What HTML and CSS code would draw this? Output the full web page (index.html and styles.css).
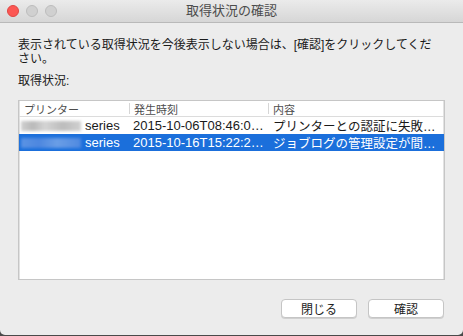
FILE: index.html
```html
<!DOCTYPE html>
<html lang="ja">
<head>
    <meta charset="UTF-8">
    <title>取得状況の確認</title>
    <link rel="stylesheet" href="styles.css">
</head>
<body>

<div class="window">
    <!-- Title bar -->
    <header class="titlebar">
        <div class="lights">
            <span class="light close"></span>
            <span class="light"></span>
            <span class="light"></span>
        </div>
        <h1 class="title">取得状況の確認</h1>
    </header>

    <div class="content">
        <p class="message">表示されている取得状況を今後表示しない場合は、[確認]をクリックしてください。</p>
        <p class="label">取得状況:</p>

        <div class="table">
            <div class="row head">
                <div class="cell printer">プリンター</div>
                <div class="cell date"><span class="sep"></span>発生時刻</div>
                <div class="cell detail"><span class="sep"></span>内容</div>
            </div>
            <div class="row">
                <div class="cell printer"><span class="blur"></span>series</div>
                <div class="cell date">2015-10-06T08:46:0…</div>
                <div class="cell detail">プリンターとの認証に失敗…</div>
            </div>
            <div class="row selected">
                <div class="cell printer"><span class="blur"></span>series</div>
                <div class="cell date">2015-10-16T15:22:2…</div>
                <div class="cell detail">ジョブログの管理設定が間…</div>
            </div>
        </div>

        <div class="buttons">
            <button class="btn">閉じる</button>
            <button class="btn">確認</button>
        </div>
    </div>
</div>

</body>
</html>
```

FILE: styles.css
```css
/* General styles */
* {
    box-sizing: border-box;
}

body {
    margin: 0;
    padding: 0;
    background-color: #4a4a4a;
    font-family: "Liberation Sans", "Noto Sans CJK JP", sans-serif;
    color: #1a1a1a;
}

.window {
    width: 463px;
    height: 335px;
    background-color: #ececec;
    border-radius: 0 0 5px 5px;
    overflow: hidden;
    display: flex;
    flex-direction: column;
}

/* Title bar */
.titlebar {
    height: 23px;
    border-bottom: 1px solid #b9b9b9;
    background: linear-gradient(#ebebeb, #d6d6d6);
    display: flex;
    align-items: center;
    position: relative;
}

.lights {
    display: flex;
    gap: 7px;
    padding-left: 7px;
}

.light {
    width: 12px;
    height: 12px;
    border-radius: 50%;
    background-color: #d0d0d0;
    border: 0.5px solid #bdbdbd;
}

.light.close {
    background-color: #fc5753;
    border-color: #df4744;
}

.title {
    position: absolute;
    left: 0;
    right: 0;
    margin: 0;
    text-align: center;
    font-size: 13px;
    font-weight: normal;
    color: #4c4c4c;
    line-height: 22px;
}

/* Content */
.content {
    padding: 15px 18px 0 18px;
    display: flex;
    flex-direction: column;
}

.message {
    margin: 0;
    width: 416px;
    font-size: 12px;
    line-height: 14px;
}

.label {
    margin: 8px 0 0 0;
    font-size: 12px;
    line-height: 14px;
}

/* Table */
.table {
    margin-top: 12px;
    height: 180px;
    background-color: white;
    border: 1px solid #c6c6c6;
    box-shadow: inset 1px 0 0 #e2e2e2, inset -1px 0 0 #e2e2e2;
}

.row {
    display: flex;
    height: 17px;
    align-items: center;
    font-size: 13px;
    white-space: nowrap;
}

.row.head {
    height: 16px;
    border-bottom: 1px solid #dcdcdc;
    font-size: 11px;
    color: #4d4d4d;
}

.row.selected {
    background-color: #1b6fdb;
    color: white;
}

.cell {
    overflow: hidden;
    display: flex;
    align-items: center;
}

.cell.printer {
    width: 110px;
    padding-left: 2px;
}

.cell.date {
    width: 139px;
    padding-left: 4px;
}

.cell.detail {
    flex: 1;
    padding-left: 5px;
    font-size: 12.5px;
}

.head .cell.printer {
    padding-left: 5px;
}

.head .cell.date,
.head .cell.detail {
    padding-left: 0;
    font-size: 11px;
}

.sep {
    width: 1px;
    height: 11px;
    background-color: #d6d6d6;
    margin-right: 4px;
}

.blur {
    display: inline-block;
    width: 60px;
    height: 10px;
    margin-right: 4px;
    background: linear-gradient(90deg, #cfcfcf, #b9b9b9 20%, #d4d4d4 40%, #bcbcbc 70%, #d0d0d0);
    filter: blur(1.5px);
}

.selected .blur {
    background: linear-gradient(90deg, #5b93e4, #4d87df 30%, #6a9ee6 60%, #4f89e0);
}

/* Buttons */
.buttons {
    display: flex;
    justify-content: flex-end;
    gap: 11px;
    margin-top: 19px;
    padding-right: 1px;
}

.btn {
    width: 76px;
    height: 19px;
    padding: 0;
    border: 1px solid #c5c5c5;
    border-radius: 4px;
    background-color: white;
    box-shadow: 0 1px 0 #d0d0d0;
    font-family: "Liberation Sans", "Noto Sans CJK JP", sans-serif;
    font-size: 12px;
    color: #222;
}
```
